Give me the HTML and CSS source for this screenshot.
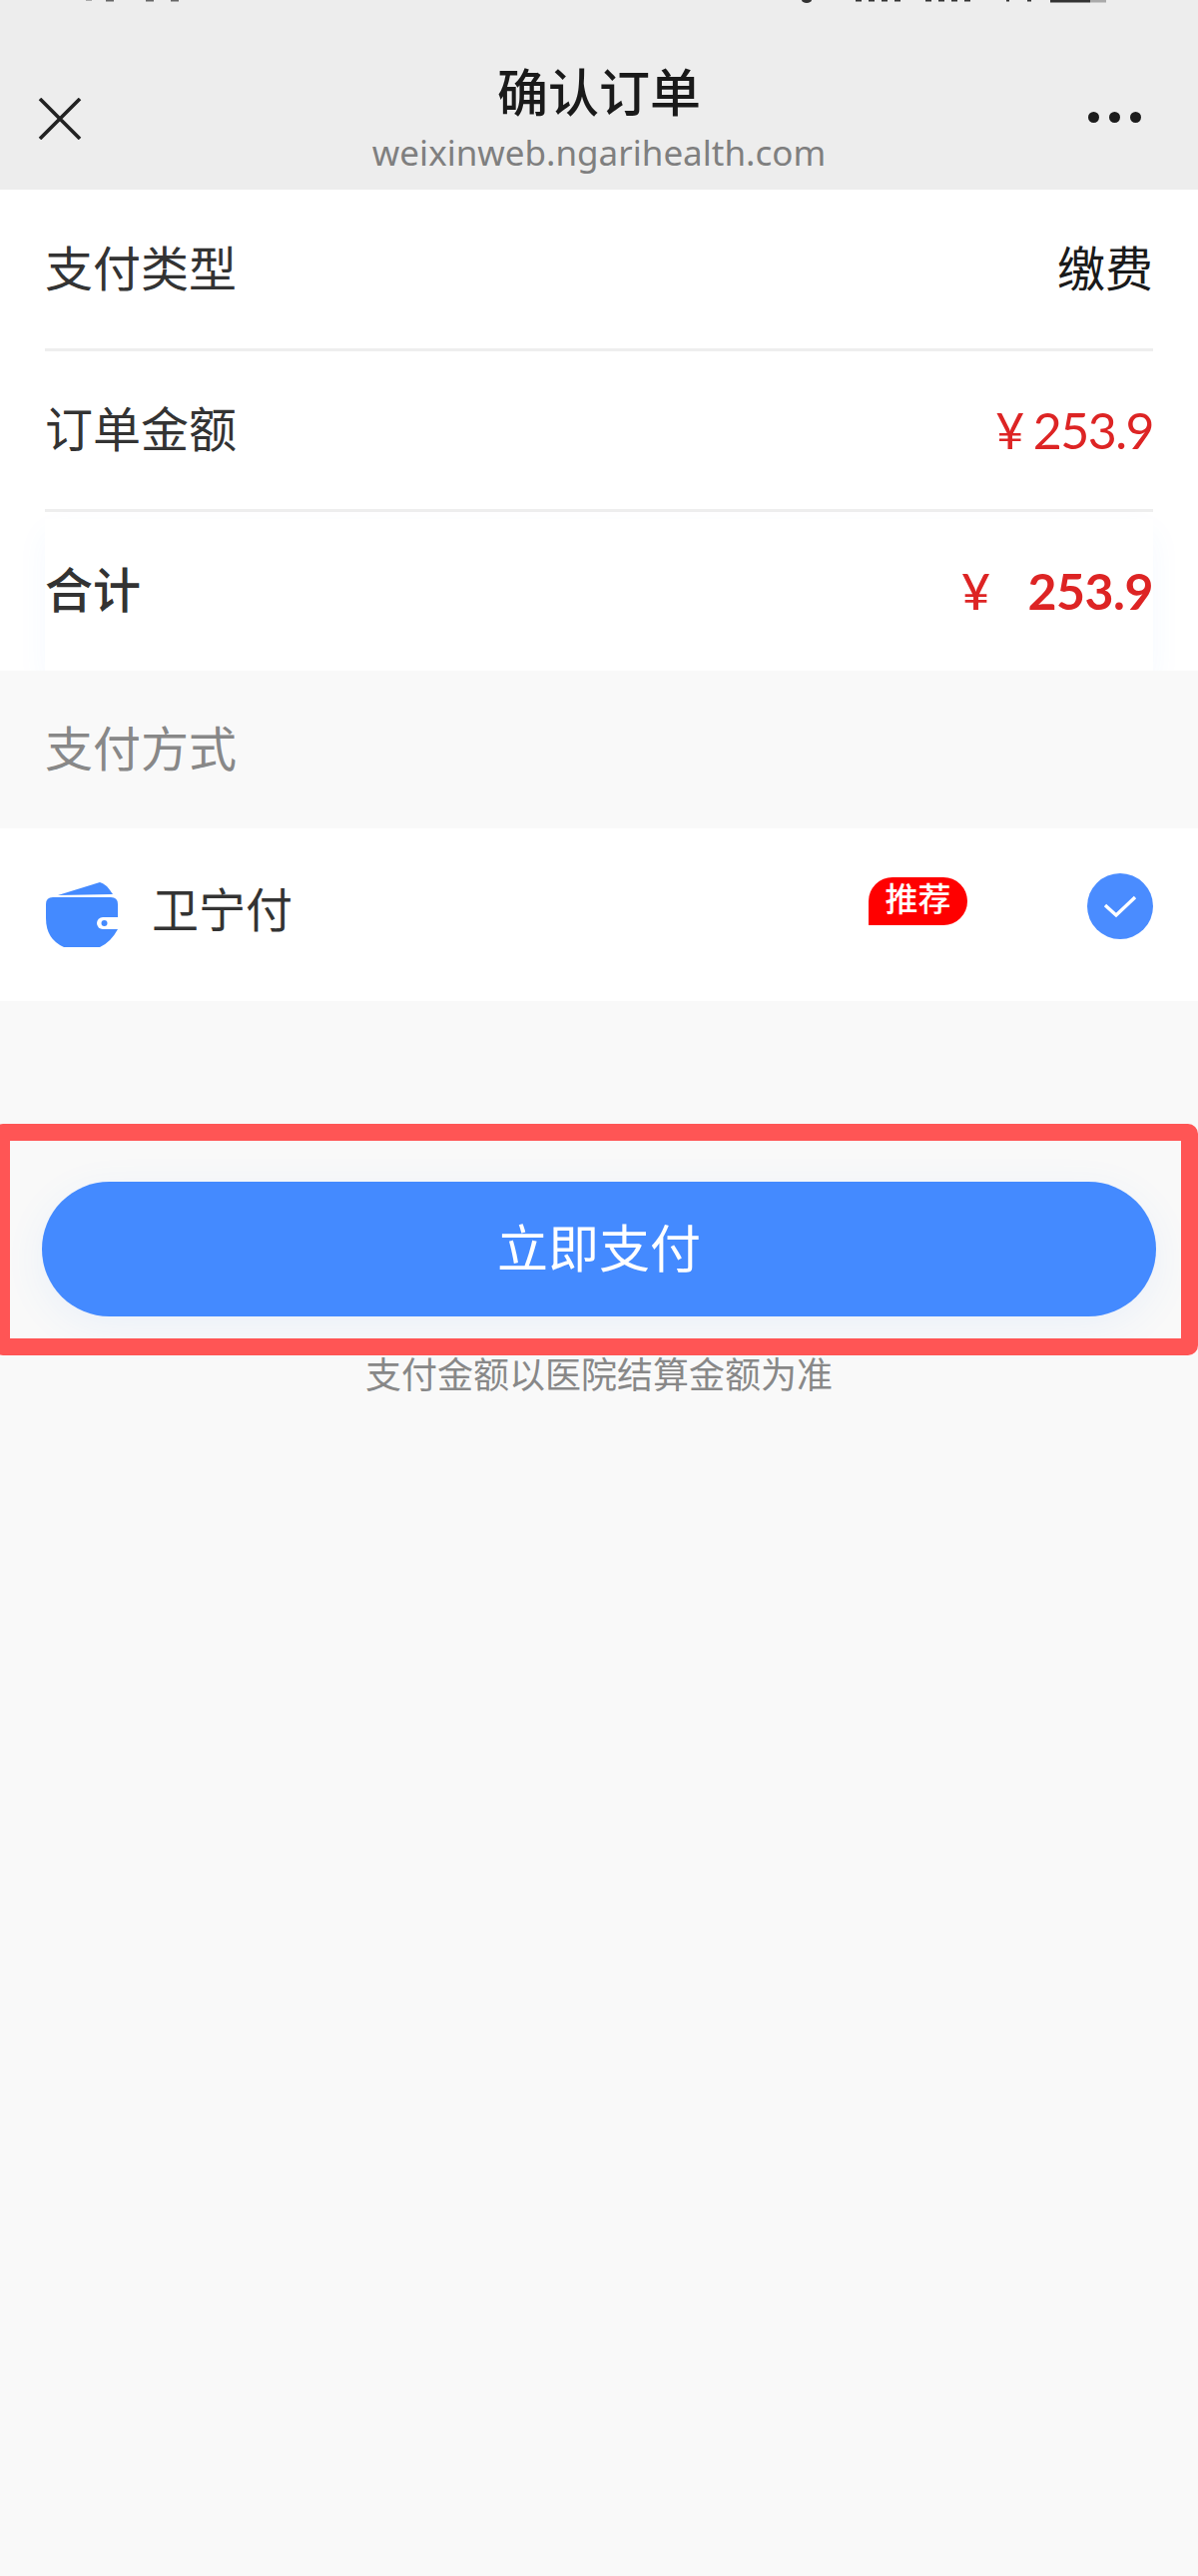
FILE: index.html
```html
<!DOCTYPE html>
<html lang="zh-CN">
<head>
<meta charset="utf-8">
<title>确认订单</title>
<link rel="stylesheet" href="styles.css">
</head>
<body>
<header class="nav">
  <svg class="status" width="1200" height="4" viewBox="0 0 1200 4">
    <g fill="#666">
      <rect x="86" y="0" width="6" height="1" fill="#aaa"/><rect x="106" y="0" width="8" height="1.500"/>
      <rect x="146" y="0" width="8" height="1.500"/><rect x="171" y="0" width="8" height="1.500"/>
    </g>
    <g fill="#333">
      <ellipse cx="808" cy="0" rx="5" ry="3"/>
      <path stroke="#333" stroke-width="2" stroke-dasharray="6 7" d="M857 0.500 H903 M927 0.500 H972"/>
      <rect x="1008" y="0" width="3" height="1.500"/><rect x="1029" y="0" width="4" height="1.500"/>
      <rect x="1052" y="0" width="40" height="2.500"/>
    </g>
    <rect x="1092" y="0" width="16" height="2.500" fill="#aaa"/>
  </svg>
  <svg class="nav-close" width="44" height="42" viewBox="0 0 44 42" fill="none" stroke="#222" stroke-width="3.600">
    <path d="M2 1 L42 41 M42 1 L2 41"/>
  </svg>
  <div class="nav-center">
    <h1 class="nav-title">确认订单</h1>
    <p class="nav-url">weixinweb.ngarihealth.com</p>
  </div>
  <div class="nav-more"><i></i><i></i><i></i></div>
</header>

<section class="summary">
  <div class="row row-line">
    <span class="label">支付类型</span>
    <span class="value">缴费</span>
  </div>
  <div class="row row-line">
    <span class="label">订单金额</span>
    <span class="amount"><span class="yen">¥</span>253.9</span>
  </div>
  <div class="row row-total">
    <span class="label label-strong">合计</span>
    <span class="amount amount-strong"><span class="yen">¥</span>253.9</span>
  </div>
</section>

<div class="method-title">支付方式</div>

<section class="method">
  <svg class="wallet" width="72" height="65" viewBox="0 0 72 65">
    <path fill="#448aff" d="M12 13 L54 0 Q60 1 67 12 Z"/>
    <path fill="#448aff" d="M7 15 H65 Q72 15 72 22 V47 Q65 60 54 65 H18 Q0 57 0 36 V22 Q0 15 7 15 Z"/>
    <rect x="51" y="35" width="26" height="12" rx="6" fill="#fff"/>
    <circle cx="58.500" cy="41" r="3" fill="#448aff"/>
  </svg>
  <span class="method-name">卫宁付</span>
  <span class="badge">推荐</span>
  <span class="check">
    <svg width="66" height="66" viewBox="0 0 66 66" fill="none" stroke="#fff" stroke-width="3.400">
      <path d="M18 32 L29 42 L48 24"/>
    </svg>
  </span>
</section>

<div class="pay">
  <button class="pay-btn" type="button">立即支付</button>
  <p class="pay-note">支付金额以医院结算金额为准</p>
  <div class="highlight"></div>
</div>
</body>
</html>
```

FILE: styles.css
```css
* { box-sizing: border-box; }
html, body { margin: 0; padding: 0; }
body {
  width: 1200px;
  min-height: 2581px;
  background: #f9f9f9;
  font-family: "Noto Sans CJK SC", "Noto Sans", sans-serif;
  color: #333;
  overflow-x: hidden;
}

.nav {
  position: relative;
  height: 190px;
  background: #ededed;
  display: grid;
  grid-template-columns: 1fr auto 1fr;
  padding: 60px 57px 0 57px;
}
.status { position: absolute; left: 0; top: 0; }
.nav-close { margin-top: 38px; margin-left: -19px; justify-self: start; }
.nav-center { text-align: center; }
.nav-title {
  margin: 0;
  font-size: 51px;
  line-height: 60px;
  font-weight: 500;
  color: #1a1a1a;
}
.nav-url {
  margin: 8px 0 0;
  font-family: "Noto Sans", sans-serif;
  font-size: 35px;
  line-height: 50px;
  color: #7f7f7f;
}
.nav-more {
  justify-self: end;
  display: flex;
  gap: 10px;
  margin-top: 52px;
  height: 11px;
}
.nav-more i {
  display: block;
  width: 11px;
  height: 11px;
  border-radius: 50%;
  background: #1c1c1c;
}

.summary { background: #fff; }
.row {
  margin: 0 45px;
  display: flex;
  justify-content: space-between;
  align-items: center;
  font-size: 48px;
}
.row-line {
  height: 161px;
  padding-bottom: 8px;
  border-bottom: 3px solid #eee;
}
.row-line:first-child { height: 162px; }
.row-total {
  position: relative;
  margin-top: 7px;
  height: 152px;
  padding-bottom: 17px;
  background: #fff;
  box-shadow: 0 14px 30px rgba(68, 138, 255, 0.05);
}
.label { color: #333; }
.label-strong { font-weight: 500; }
.value { color: #1a1a1a; }
.amount {
  margin-top: 8px;
  font-family: "Lato", sans-serif;
  font-size: 50px;
  letter-spacing: -1.5px;
  color: #dd2424;
}
.amount .yen { margin-right: 10px; }
.amount-strong {
  font-weight: 700;
  letter-spacing: -0.5px;
}
.amount-strong .yen { margin-right: 38px; font-weight: 500; }

.method-title {
  position: relative;
  height: 158px;
  padding-left: 45px;
  background: #f9f9f9;
  font-size: 48px;
  line-height: 150px;
  color: #888;
}

.method {
  height: 173px;
  background: #fff;
  display: flex;
  align-items: flex-start;
  padding: 0 45px 0 46px;
}
.wallet { margin-top: 54px; }
.method-name {
  margin-left: 34px;
  margin-top: 45px;
  font-size: 47px;
  line-height: 68px;
  color: #333;
}
.badge {
  margin-left: 577px;
  margin-top: 49px;
  width: 99px;
  height: 48px;
  border-radius: 24px 24px 24px 0;
  background: #ff0000;
  color: #fff;
  font-size: 33px;
  line-height: 40px;
  font-weight: 500;
  text-align: center;
}
.check {
  margin-left: auto;
  margin-top: 45px;
  width: 66px;
  height: 66px;
  border-radius: 50%;
  background: #4a8cff;
}
.check svg { display: block; }

.pay {
  position: relative;
  padding: 181px 42px 0;
  text-align: center;
}
.pay-btn {
  display: block;
  width: 100%;
  height: 135px;
  padding: 0 0 8px;
  border: 0;
  border-radius: 68px;
  background: #448aff;
  color: #fff;
  font-family: inherit;
  font-size: 51px;
  box-shadow: 0 10px 40px rgba(68, 138, 255, 0.08);
}
.pay-note {
  margin: 31px 0 0;
  font-size: 36px;
  line-height: 50px;
  color: #888;
}
.highlight {
  position: absolute;
  left: -7px;
  right: 0;
  top: 123px;
  height: 232px;
  border: 17px solid #ff5555;
  border-radius: 10px;
  pointer-events: none;
}
```
